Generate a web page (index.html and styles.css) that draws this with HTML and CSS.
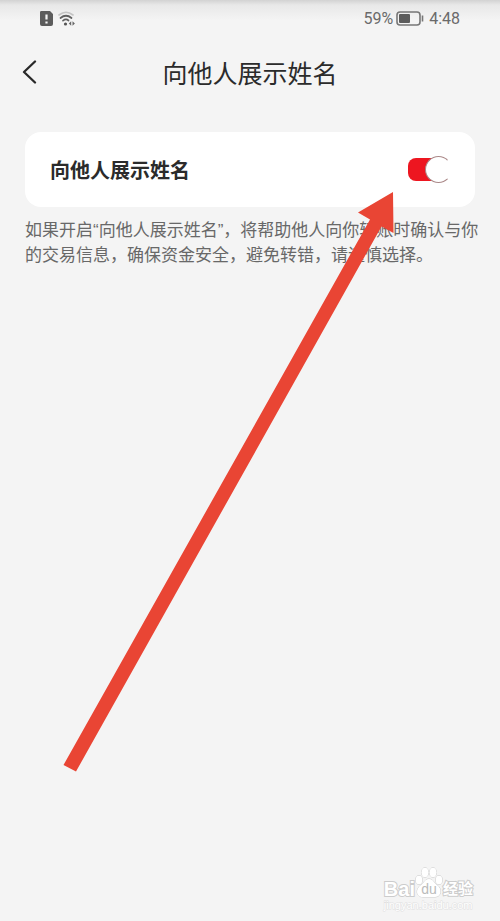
FILE: index.html
```html
<!DOCTYPE html>
<html lang="zh-CN">
<head>
<meta charset="utf-8">
<meta name="viewport" content="width=device-width, initial-scale=1">
<title>向他人展示姓名</title>
<link rel="stylesheet" href="styles.css">
</head>
<body>
<div class="status">
  <div class="status-group">
    <svg width="14" height="16" viewBox="0 0 14 16" aria-hidden="true">
      <path d="M3 0h7l3 3v10a2 2 0 0 1-2 2H2a2 2 0 0 1-2-2V2a2 2 0 0 1 3-2z" fill="#5c5c5c"/>
      <path d="M6.500 3.500v5M6.500 10.500v2" stroke="#f5f5f5" stroke-width="2.200"/>
    </svg>
    <svg width="18" height="16" viewBox="0 0 18 16" fill="none" stroke-linecap="round" aria-hidden="true">
      <path d="M1 4Q8 -1.500 15 4" stroke="#c4c4c4" stroke-width="1.600"/>
      <path d="M2.500 7Q8 2.500 13.500 7M5 9.700Q8 7.300 10.500 9.500" stroke="#606060" stroke-width="1.700"/>
      <circle cx="7.500" cy="13" r="1.600" fill="#555"/>
      <path d="M13.200 10.300v4.400l-2.400-2.200zM14.500 10.300v4.400l2.400-2.200z" fill="#666"/>
    </svg>
  </div>
  <div class="status-group status-right">
    <span>59%</span>
    <svg width="28" height="16" viewBox="0 0 28 16" aria-hidden="true">
      <rect x="1" y="1" width="23" height="13" rx="3" fill="none" stroke="#777" stroke-width="1.600"/>
      <rect x="3" y="3" width="11" height="9" rx="1" fill="#5c5c5c"/>
      <path d="M26.500 4.500v6" stroke="#777" stroke-width="1.600"/>
    </svg>
    <span class="clock">4:48</span>
  </div>
</div>
<header class="header">
  <button class="back" type="button" aria-label="返回">
    <svg width="16" height="24" viewBox="0 0 16 24" fill="none" stroke="#292929" stroke-width="2.300" stroke-linecap="round" stroke-linejoin="round" aria-hidden="true"><path d="M13 1.500L2 12l11 10.500"/></svg>
  </button>
  <h1 class="title">向他人展示姓名</h1>
</header>
<main class="main">
  <label class="card" for="show-name">
    <span>向他人展示姓名</span>
    <input class="switch" id="show-name" type="checkbox" checked>
  </label>
  <p class="note">如果开启“向他人展示姓名”，将帮助他人向你转账时确认与你<br>的交易信息，确保资金安全，避免转错，请谨慎选择。</p>
</main>
<svg class="arrow" width="340" height="590" viewBox="58 187 340 590" aria-hidden="true">
  <path d="M393 192L358 212.500L370 219.500L63.500 765L76 771.500L381.500 226.500L393.500 233z" fill="#e94534"/>
</svg>
<footer class="mark">
  <div class="brand">
    <span class="bai">Bai</span>
    <span class="paw">
      <svg width="28" height="32" viewBox="0 0 28 32" fill="#fff" stroke="#ccc" aria-hidden="true">
        <ellipse cx="4" cy="13" rx="3.300" ry="4.300"/>
        <ellipse cx="10" cy="5.500" rx="3.500" ry="4.800"/>
        <ellipse cx="18" cy="5.500" rx="3.500" ry="4.800"/>
        <ellipse cx="24" cy="13" rx="3.300" ry="4.300"/>
        <path d="M14 12c4 0 5 4 8 6c5 3 5 12-2 12H8c-8 0-7-9-2-12c3-2 4-6 8-6z"/>
      </svg>
      <span class="du">du</span>
    </span>
    <span class="exp">经验</span>
  </div>
  <div class="url">jingyan.baidu.com</div>
</footer>
</body>
</html>
```
FILE: styles.css
```css
* {
  box-sizing: border-box;
}

body {
  margin: 0;
  min-height: 100vh;
  position: relative;
  display: flex;
  flex-direction: column;
  background: linear-gradient(#d2d2d2, #e8e8e8 5px, #f4f4f4 20px) #f4f4f4;
  background-size: 100% 20px;
  background-repeat: no-repeat;
  color: #2b2b2b;
  font-family: "Noto Sans CJK SC", sans-serif;
}

.status {
  height: 38px;
  padding: 0 40px;
  display: flex;
  align-items: center;
  justify-content: space-between;
  color: #6a6a6a;
  font: 16px/20px "Roboto", sans-serif;
}

.status-group {
  display: flex;
  align-items: center;
  gap: 4px;
}

.status-right {
  gap: 3px;
}

.clock {
  margin-left: 2px;
}

.header {
  height: 68px;
  display: grid;
  grid-template-columns: 60px 1fr 60px;
  align-items: center;
}

.back {
  width: 40px;
  height: 44px;
  margin-left: 10px;
  padding: 0;
  border: 0;
  background: none;
  display: grid;
  place-items: center;
}

.title {
  margin: 0;
  text-align: center;
  font-size: 25px;
  line-height: 36px;
  font-weight: 400;
}

.main {
  padding: 26px 25px;
}

.card {
  min-height: 75px;
  padding: 0 23px 0 25px;
  border-radius: 16px;
  background: #fff;
  display: flex;
  align-items: center;
  justify-content: space-between;
  font-size: 20px;
  line-height: 28px;
  font-weight: 700;
}

.switch {
  appearance: none;
  width: 44px;
  height: 23px;
  margin: 0;
  border-radius: 8px;
  background: #ccc;
  display: flex;
  align-items: center;
}

.switch::before {
  content: "";
  width: 25px;
  height: 25px;
  flex: none;
  border: 1px solid #a88;
  border-radius: 50%;
  background: #fff;
}

.switch:checked {
  justify-content: flex-end;
  background: linear-gradient(90deg, #ed1620 28px, #fff 28px);
}

.switch:checked::before {
  border-right-color: #fff;
}

.note {
  margin: 11px 0 0;
  color: #686868;
  font-family: "Liberation Sans", "Noto Sans CJK SC", sans-serif;
  font-size: 17px;
  line-height: 25px;
  white-space: nowrap;
}

.arrow {
  position: absolute;
  left: 58px;
  top: 187px;
  pointer-events: none;
}

.mark {
  margin-top: auto;
  margin-left: auto;
  padding: 0 27px 10px 0;
  color: #fff;
  font-family: "Liberation Sans", "Noto Sans CJK SC", sans-serif;
  -webkit-text-stroke: 2px #ccc;
  paint-order: stroke fill;
}

.brand {
  height: 32px;
  display: flex;
  align-items: flex-end;
}

.bai {
  font-size: 20px;
  line-height: 20px;
  font-weight: 700;
}

.paw {
  display: grid;
  place-items: end center;
}

.paw > * {
  grid-area: 1 / 1;
}

.du {
  color: #bbb;
  font-size: 14px;
  line-height: 20px;
  -webkit-text-stroke: 0;
}

.exp {
  font-size: 15px;
  line-height: 20px;
  font-weight: 700;
}

.url {
  font-size: 11px;
  line-height: 12px;
  -webkit-text-stroke: 1px #e0e0e0;
}
```
